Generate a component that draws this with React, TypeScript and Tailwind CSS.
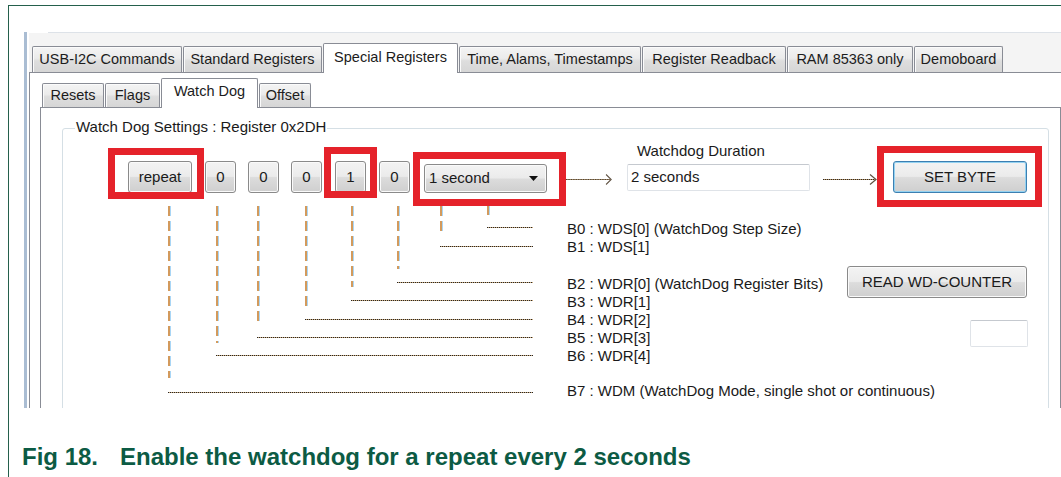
import React from "react";

type TabDef = { label: string; w: string; sel?: boolean };

const mainTabs: TabDef[] = [
  { label: "USB-I2C Commands", w: "w-[150px]" },
  { label: "Standard Registers", w: "w-[139px]" },
  { label: "Special Registers", w: "w-[135px]", sel: true },
  { label: "Time, Alams, Timestamps", w: "w-[182px]" },
  { label: "Register Readback", w: "w-[144px]" },
  { label: "RAM 85363 only", w: "w-[126px]" },
  { label: "Demoboard", w: "w-[89px]" },
];

const subTabs: TabDef[] = [
  { label: "Resets", w: "w-[62px]" },
  { label: "Flags", w: "w-[55px]" },
  { label: "Watch Dog", w: "w-[97px]", sel: true },
  { label: "Offset", w: "w-[52px]" },
];

function Tab({ tab, small }: { tab: TabDef; small?: boolean }) {
  const base =
    "flex items-center justify-center whitespace-nowrap rounded-t-[2px] border border-b-0 border-[#898c95] text-[14.5px] text-[#1c1c1c]";
  if (tab.sel) {
    return (
      <div
        className={`${base} ${tab.w} relative z-10 -mb-px h-[30px] bg-white ${
          small ? "pb-[4px]" : "pb-[2px]"
        }`}
      >
        {tab.label}
      </div>
    );
  }
  return (
    <div
      className={`${base} ${tab.w} ${
        small ? "h-[24px]" : "h-[26px]"
      } bg-[linear-gradient(#f4f4f4_0%,#ebebeb_45%,#dedede_55%,#d6d6d6_100%)] shadow-[inset_1px_1px_0_#fbfbfb]`}
    >
      {tab.label}
    </div>
  );
}

function WinButton({
  className,
  children,
  focused,
}: {
  className: string;
  children?: React.ReactNode;
  focused?: boolean;
}) {
  return (
    <div
      className={`flex items-center justify-center rounded-[3px] border text-[15px] text-[#1a1a1a] bg-[linear-gradient(#f3f3f3_0%,#ebebeb_48%,#dcdcdc_52%,#cfcfcf_100%)] ${
        focused
          ? "border-[#3c7fb1] shadow-[inset_0_0_0_1px_#94d2f1]"
          : "border-[#8a8a8a] shadow-[inset_0_0_0_1px_#fafafa]"
      } ${className}`}
    >
      {children}
    </div>
  );
}

function Arrow({ className }: { className: string }) {
  return (
    <svg className={className} viewBox="0 0 54 12" preserveAspectRatio="none">
      <line x1="0" y1="6.5" x2="52" y2="6.5" stroke="#b8925e" strokeWidth="1" />
      <line x1="0" y1="6.5" x2="52" y2="6.5" stroke="#2b2b2b" strokeWidth="1" strokeDasharray="1 1" />
      <polyline points="47,1.5 53,6.5 47,11.5" fill="none" stroke="#5e5040" strokeWidth="1.2" />
    </svg>
  );
}

// Connector lines from each bit button down to its label
const drops: [number, number][] = [
  [168, 378],
  [216, 343],
  [257, 325],
  [305, 308],
  [351, 287],
  [397, 269],
  [440, 233],
  [487, 215],
];
const leaders: [number, number][] = [
  [487, 227],
  [440, 246],
  [397, 282],
  [351, 300],
  [305, 319],
  [257, 337],
  [216, 355],
  [168, 392],
];

// Highlight frames drawn over the controls
const marks = [
  { x: 111.5, y: 151.5, w: 89, h: 44 },
  { x: 327.5, y: 150.5, w: 46, h: 44 },
  { x: 416.5, y: 155.5, w: 146, h: 47 },
  { x: 880.5, y: 149.5, w: 158, h: 54 },
];

export default function App() {
  return (
    <div className="relative h-[477px] w-[1061px] overflow-hidden bg-white font-['Liberation_Sans',Arial,sans-serif]">
      <div className="ml-[8px] mt-[5px] h-[472px] border-l border-t border-[#24604c]">
        {/* application window */}
        <div className="ml-[15px] mt-[26px] h-[376px] w-[1038px] overflow-hidden border-l-[3px] border-[#aabdd3] pl-[2px]">
          <div className="ml-[19px] h-px bg-[#dde2e8]" />
          <div className="flex h-[39px] items-end gap-px bg-[#f4f4f4] pl-[3px]">
            {mainTabs.map((t) => (
              <Tab key={t.label} tab={t} />
            ))}
          </div>
          <div className="h-[336px] border-l border-t border-[#898c95] bg-white">
            <div className="flex h-[34px] items-end gap-px pl-[12px]">
              {subTabs.map((t) => (
                <Tab key={t.label} tab={t} small />
              ))}
            </div>
            <div className="ml-[10px] h-[400px] w-[1021px] border-l border-r border-t border-[#898c95]">
              {/* group box */}
              <div className="relative ml-[21px] mt-[20px] h-[380px] w-[987px] rounded-[3px] border border-[#d5dfe5] text-[#1a1a1a]">
                <div className="absolute -top-[11px] left-[12px] bg-white px-px text-[15px] leading-[17px]">
                  Watch Dog Settings : Register 0x2DH
                </div>
                <div className="pl-[574px] pt-[13px] text-[15px] leading-[17px]">Watchdog Duration</div>
                <div className="mt-[2px] flex items-start">
                  <WinButton className="ml-[65px] h-[32px] w-[64px]">repeat</WinButton>
                  <WinButton className="ml-[13px] h-[32px] w-[31px]">0</WinButton>
                  <WinButton className="ml-[12px] h-[32px] w-[31px]">0</WinButton>
                  <WinButton className="ml-[12px] h-[32px] w-[31px]">0</WinButton>
                  <WinButton className="ml-[13px] h-[32px] w-[31px]">1</WinButton>
                  <WinButton className="ml-[13px] h-[32px] w-[31px]">0</WinButton>
                  <WinButton className="ml-[14px] mt-[3px] h-[29px] w-[123px] !justify-between pl-[4px] pr-[8px]">
                    <span>1 second</span>
                    <svg width="9" height="5" viewBox="0 0 9 5">
                      <polygon points="0,0 9,0 4.5,5" fill="#111" />
                    </svg>
                  </WinButton>
                  <Arrow className="ml-[19px] mt-[12px] h-[12px] w-[46px]" />
                  <div className="ml-[15px] mt-[3px] flex h-[27px] w-[183px] items-center rounded-[2px] border border-[#dfe3e8] border-t-[#c5c9cf] pl-[3px] text-[15px]">
                    2 seconds
                  </div>
                  <Arrow className="ml-[13px] mt-[12px] h-[12px] w-[54px]" />
                  <WinButton focused className="ml-[16px] h-[32px] w-[134px]">
                    SET BYTE
                  </WinButton>
                </div>
                <div className="mt-[27px] pl-[504px] text-[15px] leading-[18px]">
                  <div>B0 : WDS[0] (WatchDog Step Size)</div>
                  <div>B1 : WDS[1]</div>
                </div>
                <div className="mt-[10px] flex">
                  <div className="ml-[504px] w-[280px] whitespace-nowrap pt-[9px] text-[15px] leading-[18px]">
                    <div>B2 : WDR[0] (WatchDog Register Bits)</div>
                    <div>B3 : WDR[1]</div>
                    <div>B4 : WDR[2]</div>
                    <div>B5 : WDR[3]</div>
                    <div>B6 : WDR[4]</div>
                    <div className="mt-[17px]">B7 : WDM (WatchDog Mode, single shot or continuous)</div>
                  </div>
                  <div className="flex flex-col">
                    <WinButton className="h-[32px] w-[180px]">READ WD-COUNTER</WinButton>
                    <div className="ml-[123px] mt-[22px] h-[27px] w-[58px] rounded-[2px] border border-[#dfe3e8] border-t-[#c5c9cf]" />
                  </div>
                </div>
              </div>
            </div>
          </div>
        </div>
        <div className="ml-[13px] mt-[35px] flex text-[24px] font-bold leading-[28px] text-[#0c5b44]">
          <span className="w-[98px]">Fig 18.</span>
          <span>Enable the watchdog for a repeat every 2 seconds</span>
        </div>
      </div>

      <svg className="pointer-events-none absolute left-0 top-0" width="1061" height="477">
        {drops.map(([x, y2]) => (
          <g key={`d${x}`}>
            <line x1={x + 2.5} y1={206} x2={x + 2.5} y2={y2} stroke="#a9d6f6" strokeWidth="1" strokeDasharray="10 5" />
            <line x1={x + 1} y1={206} x2={x + 1} y2={y2} stroke="#d39a5c" strokeWidth="2" strokeDasharray="10 5" />
          </g>
        ))}
        {leaders.map(([x, y]) => (
          <g key={`h${y}`}>
            <line x1={x} y1={y + 0.5} x2={533} y2={y + 0.5} stroke="#c9a778" strokeWidth="1" />
            <line x1={x} y1={y + 0.5} x2={533} y2={y + 0.5} stroke="#262626" strokeWidth="1" strokeDasharray="1 1" />
          </g>
        ))}
        {marks.map((m) => (
          <rect key={m.x} x={m.x} y={m.y} width={m.w} height={m.h} fill="none" stroke="#e5222a" strokeWidth="7" />
        ))}
      </svg>
    </div>
  );
}
